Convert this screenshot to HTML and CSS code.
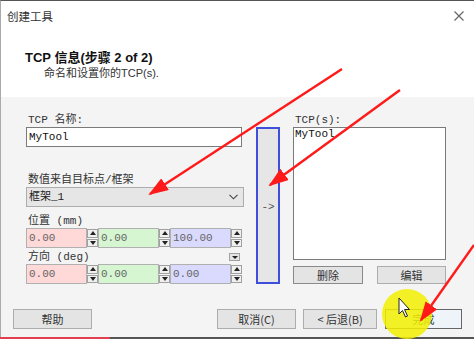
FILE: index.html
```
<!DOCTYPE html>
<html lang="zh">
<head>
<meta charset="utf-8">
<title>创建工具</title>
<link rel="stylesheet" href="styles.css">
</head>
<body>
<div class="window">
  <div class="titlebar">
    <span class="t-text">创建工具</span>
    <svg class="close" width="10" height="10" viewBox="0 0 10 10"><path d="M0.5 0.5L9.5 9.5M9.5 0.5L0.5 9.5" stroke="#666" stroke-width="1.2"/></svg>
  </div>
  <div class="header">
    <div class="h-title">TCP 信息(步骤 2 of 2)</div>
    <div class="h-sub">命名和设置你的TCP(s).</div>
  </div>
  <div class="body">
    <div class="content">
      <div class="left">
        <div class="lbl">TCP 名称:</div>
        <div class="textbox">MyTool</div>
        <div class="lbl lbl2">数值来自目标点/框架</div>
        <div class="combo"><span>框架_1</span>
          <svg class="chev" width="9" height="6" viewBox="0 0 9 6"><path d="M0.5 0.8L4.5 4.8L8.5 0.8" fill="none" stroke="#444" stroke-width="1.1"/></svg>
        </div>
        <div class="lbl lbl3">位置 (mm)</div>
        <div class="row">
          <div class="grp"><div class="fld red">0.00</div><div class="spin"><i class="up"></i><i class="dn"></i></div></div>
          <div class="grp"><div class="fld green">0.00</div><div class="spin"><i class="up"></i><i class="dn"></i></div></div>
          <div class="grp"><div class="fld blue">100.00</div><div class="spin"><i class="up"></i><i class="dn"></i></div></div>
        </div>
        <div class="lbl lbl4"><span>方向 (deg)</span><span class="mini"><i class="dn"></i></span></div>
        <div class="row">
          <div class="grp"><div class="fld red">0.00</div><div class="spin"><i class="up"></i><i class="dn"></i></div></div>
          <div class="grp"><div class="fld green">0.00</div><div class="spin"><i class="up"></i><i class="dn"></i></div></div>
          <div class="grp"><div class="fld blue">0.00</div><div class="spin"><i class="up"></i><i class="dn"></i></div></div>
        </div>
      </div>
      <div class="mid"><div class="addbtn">-&gt;</div></div>
      <div class="right">
        <div class="lbl">TCP(s):</div>
        <div class="listbox"><div class="item">MyTool</div></div>
        <div class="rbtns">
          <div class="btn sbtn">删除</div>
          <div class="btn sbtn">编辑</div>
        </div>
      </div>
    </div>
    <div class="footer">
      <div class="btn fbtn help">帮助</div>
      <div class="btn fbtn cancel">取消(C)</div>
      <div class="btn fbtn back">&lt; 后退(B)</div>
      <div class="btn fbtn finish">完成</div>
    </div>
  </div>
  <div class="bottomline"><div class="progress"></div></div>
  <svg class="overlay" width="474" height="339" viewBox="0 0 474 339">
    <defs>
      <marker id="ah" markerUnits="userSpaceOnUse" markerWidth="20" markerHeight="14" refX="18" refY="7" orient="auto">
        <path d="M0 0L20 7L0 14Z" fill="#ff1a1a"/>
      </marker>
    </defs>
    <circle cx="407" cy="314" r="25" fill="#f2f000" opacity="0.85"/>
    <path d="M399 298L399 314L402.5 310.5L405.5 317L407.5 316L404.5 309.5L409.5 309.5Z" fill="#fff" stroke="#222" stroke-width="1"/>
    <line x1="342" y1="69" x2="150" y2="194" stroke="#ff1a1a" stroke-width="2.4" marker-end="url(#ah)"/>
    <line x1="400" y1="90" x2="270" y2="185" stroke="#ff1a1a" stroke-width="2.4" marker-end="url(#ah)"/>
    <line x1="474" y1="245" x2="421" y2="320" stroke="#ff1a1a" stroke-width="2.4" marker-end="url(#ah)"/>
  </svg>
</div>
</body>
</html>
```
FILE: styles.css
```
* { box-sizing: border-box; }
html, body { margin: 0; padding: 0; }
body {
  width: 474px;
  height: 339px;
  overflow: hidden;
  background: #fff;
  font-family: "Liberation Mono", "Noto Sans CJK SC", monospace;
  color: #222;
}
.window {
  position: relative;
  width: 474px;
  height: 339px;
  border-top: 1px solid #555;
  border-left: 1px solid #aaa;
  background: #fff;
  display: flex;
  flex-direction: column;
}
.titlebar {
  height: 29px;
  display: flex;
  align-items: center;
  justify-content: space-between;
  padding: 0 10px 0 6px;
  font-family: "Noto Sans CJK SC", sans-serif;
  font-size: 11.5px;
  color: #333;
}
.header {
  height: 67px;
  padding-top: 20px;
  padding-left: 24px;
}
.h-title {
  font-family: "Liberation Sans", "Noto Sans CJK SC", sans-serif;
  font-weight: bold;
  font-size: 13px;
  line-height: 16px;
  color: #111;
}
.h-sub {
  font-family: "Liberation Sans", "Noto Sans CJK SC", sans-serif;
  font-size: 11px;
  line-height: 14px;
  padding-left: 19px;
  color: #333;
}
.body {
  flex: 1;
  background: #f4f4f4;
  display: flex;
  flex-direction: column;
}
.content {
  display: flex;
  padding: 16px 0 0 25px;
}
.left { width: 216px; }
.lbl {
  font-size: 11px;
  line-height: 14px;
  height: 14px;
  padding-left: 2px;
  color: #333;
  white-space: nowrap;
}
.lbl2 { margin-top: 26px; }
.lbl3 { margin-top: 7px; }
.lbl4 {
  margin-top: 2px;
  display: flex;
  justify-content: space-between;
  align-items: flex-start;
}
.textbox {
  height: 20px;
  border: 1px solid #7a7a7a;
  background: #fff;
  font-size: 11px;
  line-height: 18px;
  padding-left: 2px;
  color: #111;
}
.combo {
  height: 20px;
  width: 218px;
  border: 1px solid #adadad;
  background: #e6e6e6;
  font-size: 11px;
  line-height: 18px;
  padding: 0 5px 0 2px;
  display: flex;
  justify-content: space-between;
  align-items: center;
  color: #222;
}
.row {
  display: flex;
  height: 20px;
}
.grp {
  display: flex;
  width: 72px;
}
.fld {
  width: 61px;
  height: 20px;
  border: 1px solid #b0b0b0;
  font-size: 11px;
  line-height: 18px;
  padding-left: 2px;
  color: #666;
}
.red { background: #ffd8d8; }
.green { background: #d6f6d2; }
.blue { background: #dadaff; }
.spin {
  width: 11px;
  height: 20px;
  display: flex;
  flex-direction: column;
  padding: 1px 0;
  gap: 1px;
}
.spin i, .mini {
  flex: 1;
  display: flex;
  align-items: center;
  justify-content: center;
  background: #f0f0f0;
  border: 1px solid #a0a0a0;
}
.up::before, .dn::before {
  content: "";
  width: 0;
  height: 0;
  border-left: 3px solid transparent;
  border-right: 3px solid transparent;
}
.up::before { border-bottom: 4px solid #222; }
.dn::before { border-top: 4px solid #222; }
.mini {
  flex: none;
  width: 11px;
  height: 8px;
  margin-top: 3px;
  margin-right: 2px;
  background: #e4e4e4;
}
.mini .dn::before, .mini i::before { border-top-width: 3px; }
.mini i { display: flex; }
.mid {
  margin-left: 14px;
  padding-top: 14px;
}
.addbtn {
  width: 24px;
  height: 157px;
  border: 2px solid #3f4fdc;
  background: #e6e6e6;
  display: flex;
  align-items: center;
  justify-content: center;
  font-size: 11px;
  color: #555;
  padding-top: 2px;
}
.right {
  margin-left: 13px;
  width: 153px;
}
.listbox {
  height: 133px;
  border: 1px solid #7a7a7a;
  background: #fff;
}
.item {
  font-size: 11px;
  line-height: 13px;
  padding-left: 1px;
  color: #111;
}
.rbtns {
  display: flex;
  justify-content: space-between;
  margin-top: 6px;
}
.btn {
  display: flex;
  align-items: center;
  justify-content: center;
  border: 1px solid #adadad;
  background: #e4e4e4;
  font-family: "Noto Sans CJK SC", sans-serif;
  font-size: 11px;
  color: #333;
}
.sbtn {
  width: 70px;
  height: 18px;
  border-color: #8a8a8a;
}
.rbtns .sbtn:last-child { width: 69px; border-color: #adadad; }
.footer {
  margin-top: auto;
  display: flex;
  padding: 0 12px 8px 12px;
}
.fbtn { height: 20px; }
.help { width: 79px; }
.cancel { width: 79px; margin-left: auto; }
.back { width: 74px; margin-left: 7px; }
.finish {
  width: 77px;
  margin-left: 8px;
  border-color: #666;
  background: #eef4fa;
}
.bottomline {
  height: 2px;
  background: #555;
  margin-left: -1px;
}
.progress {
  width: 110px;
  height: 2px;
  background: #e04050;
}
.overlay {
  position: absolute;
  left: -1px;
  top: -1px;
  pointer-events: none;
}
```
